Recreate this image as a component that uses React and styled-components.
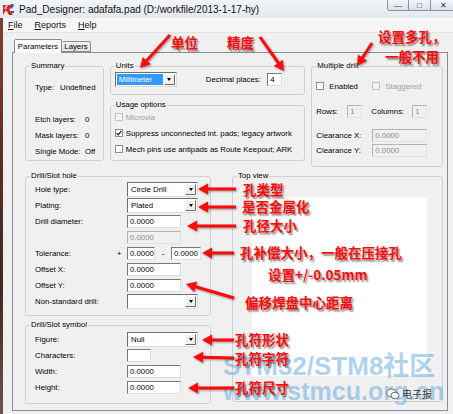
import React from 'react';
import styled, { createGlobalStyle } from 'styled-components';

const UI_FONT = `"Liberation Sans", Arial, sans-serif`;
const CJK_FONT = `"Noto Sans CJK SC", "Noto Sans", sans-serif`;

const GlobalStyle = createGlobalStyle`
  * { box-sizing: border-box; }
  html, body { margin: 0; padding: 0; }
  body {
    width: 453px;
    height: 414px;
    overflow: hidden;
    background: linear-gradient(180deg, #8a3f2e 0%, #5b2f22 40%, #3d2a22 70%, #6e5447 100%);
    font-family: ${UI_FONT};
  }
`;

const Page = styled.div`
  position: relative;
  width: 453px;
  height: 414px;
  overflow: hidden;
  display: flex;
  flex-direction: column;
`;

/* ---------- window chrome ---------- */

const TitleBar = styled.div`
  height: 18px;
  flex: none;
  display: flex;
  align-items: center;
  padding-left: 2px;
  background: linear-gradient(180deg, #f2f4f7 0%, #e4e9ef 100%);
`;

const TitleText = styled.span`
  margin-left: 4px;
  font-size: 10px;
  color: #111;
  white-space: nowrap;
`;

const CaptionGroup = styled.div`
  align-self: flex-start;
  margin-left: auto;
  margin-right: -4px;
  display: flex;
  height: 11px;
  border: 1px solid #8794a6;
  border-top: none;
  border-radius: 0 0 3px 3px;
  overflow: hidden;
`;

const CaptionButton = styled.div`
  width: ${p => p.$w}px;
  height: 100%;
  display: flex;
  align-items: center;
  justify-content: center;
  background: linear-gradient(180deg, #f3f5f8 0%, #dbe1e8 100%);
  border-left: ${p => (p.$first ? 'none' : '1px solid #8794a6')};
  font-size: 8px;
  color: #333;
`;

const Frame = styled.div`
  flex: 1;
  margin-left: 3px;
  display: flex;
  flex-direction: column;
  background: #f0f0f0;
`;

const MenuBar = styled.div`
  height: 15px;
  flex: none;
  display: flex;
  align-items: center;
  gap: 12px;
  padding-left: 5px;
  background: #f6f6f6;
  border-bottom: 1px solid #e4e4e4;
  font-size: 9px;
  color: #111;
`;

const MenuItem = styled.span`
  white-space: nowrap;
  u { text-decoration: underline; }
`;

const Client = styled.div`
  flex: 1;
  display: flex;
  flex-direction: column;
  padding: 6px 5px 3px 9px;
`;

const TabStrip = styled.div`
  height: 13px;
  flex: none;
  display: flex;
  align-items: flex-end;
  padding-left: 2px;
`;

const Tab = styled.div`
  position: relative;
  z-index: ${p => (p.$active ? 1 : 0)};
  width: ${p => p.$w}px;
  height: ${p => (p.$active ? 14 : 11)}px;
  margin-bottom: ${p => (p.$active ? -1 : 0)}px;
  display: flex;
  align-items: center;
  justify-content: center;
  border: 1px solid #898c95;
  border-bottom: ${p => (p.$active ? 'none' : '1px solid #898c95')};
  border-left: ${p => (p.$active ? '1px solid #898c95' : 'none')};
  border-radius: 2px 2px 0 0;
  background: ${p => (p.$active ? '#fcfcfc' : 'linear-gradient(180deg, #f2f2f2, #e3e3e3)')};
  font-size: 7.8px;
  color: #000;
`;

const TabPanel = styled.div`
  flex: 1;
  display: flex;
  flex-direction: column;
  gap: 4px;
  padding: 8px 4px 0 12px;
  border: 1px solid #898c95;
  background: #f0f0f0;
  font-size: 7.8px;
  color: #000;
`;

/* ---------- group boxes ---------- */

const Row = styled.div`
  display: flex;
  align-items: flex-start;
  gap: ${p => p.$gap}px;
`;

const Column = styled.div`
  display: flex;
  flex-direction: column;
  gap: ${p => p.$gap}px;
  width: ${p => p.$w}px;
`;

const Group = styled.fieldset`
  margin: 0;
  min-width: 0;
  width: ${p => (p.$w ? `${p.$w}px` : '100%')};
  height: ${p => p.$h}px;
  padding: 0;
  border: 1px solid #d0d0d0;
  border-radius: 3px;
`;

const Legend = styled.legend`
  margin-left: 4px;
  padding: 0 1px;
  font-size: 7.8px;
  line-height: 10px;
  color: #000;
`;

const GroupBody = styled.div`
  padding-left: ${p => p.$pl ?? 4}px;
`;

/* summary */
const InfoRow = styled.div`
  display: flex;
  align-items: center;
  height: 10px;
  margin-top: ${p => p.$mt}px;
  white-space: nowrap;
`;

const InfoLabel = styled.span`
  width: ${p => p.$w}px;
  flex: none;
`;

/* form rows */
const FormRow = styled.div`
  display: flex;
  align-items: center;
  height: ${p => p.$h ?? 16}px;
  margin-top: ${p => p.$mt ?? 0}px;
  white-space: nowrap;
`;

const FormLabel = styled.span`
  width: ${p => p.$w}px;
  flex: none;
  margin-left: ${p => p.$ml ?? 0}px;
  color: ${p => (p.$disabled ? '#9a9a9a' : '#000')};
`;

const Sign = styled.span`
  width: ${p => p.$w}px;
  flex: none;
  text-align: ${p => p.$align ?? 'left'};
`;

const Field = styled.div`
  width: ${p => p.$w}px;
  height: 13px;
  flex: none;
  margin-left: ${p => p.$ml ?? 0};
  padding-left: 2px;
  background: ${p => (p.$disabled ? '#f0f0f0' : '#fff')};
  color: ${p => (p.$disabled ? '#8a8a8a' : '#000')};
  border: 1px solid;
  border-color: ${p =>
    p.$disabled ? '#b4b4b4 #e2e2e2 #e2e2e2 #b4b4b4' : '#7a7a7a #dedede #dedede #7a7a7a'};
  font-size: 7.8px;
  line-height: 11px;
  overflow: hidden;
`;

const SelectBox = styled.div`
  width: ${p => p.$w}px;
  height: 15px;
  flex: none;
  display: flex;
  padding: 1px;
  background: #fff;
  border: 1px solid;
  border-color: #6f6f6f #dcdcdc #dcdcdc #6f6f6f;
`;

const SelectValue = styled.div`
  flex: 1;
  display: flex;
  align-items: center;
  padding-left: 2px;
  margin-right: 1px;
  background: ${p => (p.$focused ? '#3399ff' : 'transparent')};
  color: ${p => (p.$focused ? '#fff' : '#000')};
  font-size: 7.8px;
`;

const DropButton = styled.div`
  width: 11px;
  flex: none;
  display: flex;
  align-items: center;
  justify-content: center;
  background: #f0f0f0;
  border: 1px solid;
  border-color: #ffffff #6a6a6a #6a6a6a #ffffff;
  &::after {
    content: '';
    border-left: 2.5px solid transparent;
    border-right: 2.5px solid transparent;
    border-top: 3px solid #000;
  }
`;

const CheckRow = styled.div`
  display: flex;
  align-items: center;
  gap: ${p => p.$gap ?? 3}px;
  height: 10px;
  width: ${p => (p.$w ? `${p.$w}px` : 'auto')};
  flex: none;
  margin-top: ${p => p.$mt ?? 0}px;
  white-space: nowrap;
  color: ${p => (p.$disabled ? '#a0a0a0' : '#000')};
`;

const Box = styled.span`
  width: 8px;
  height: 8px;
  flex: none;
  display: flex;
  align-items: center;
  justify-content: center;
  border: 1px solid ${p => (p.$disabled ? '#c2c2c2' : '#8e8f8f')};
  background: ${p => (p.$disabled ? '#f4f4f4' : '#fff')};
`;

const Preview = styled.div`
  width: 175px;
  height: 179px;
  margin-top: 16px;
  background: #fff;
`;

const UnitsRow = styled.div`
  display: flex;
  align-items: center;
  margin-top: 1px;
  padding-right: 22px;
  white-space: nowrap;
`;

/* ---------- annotation layer ---------- */

const Overlay = styled.div`
  position: absolute;
  inset: 0;
  pointer-events: none;
`;

const ArrowLayer = styled.svg`
  position: absolute;
  inset: 0;
  filter: drop-shadow(1.5px 1.5px 1px rgba(0, 0, 0, 0.4));
`;

const Note = styled.span`
  position: absolute;
  left: ${p => p.$x}px;
  top: ${p => p.$y}px;
  font-family: ${CJK_FONT};
  font-weight: 700;
  font-size: ${p => p.$size ?? 13.5}px;
  line-height: 1;
  color: #ff0a0a;
  white-space: nowrap;
  text-shadow: 1.5px 1.5px 1.5px rgba(0, 0, 0, 0.45);
`;

const Watermark = styled.div`
  position: absolute;
  left: 223px;
  top: 353px;
  font-family: "Liberation Sans", "Noto Sans CJK SC", sans-serif;
  font-weight: 700;
  color: rgba(95, 165, 220, 0.5);
  line-height: 1;
  white-space: nowrap;
`;

const WatermarkLine = styled.div`
  font-size: ${p => p.$size}px;
  height: ${p => p.$h}px;
`;

const Badge = styled.div`
  position: absolute;
  left: 386px;
  top: 386px;
  display: flex;
  align-items: center;
  gap: 2px;
  font-family: ${CJK_FONT};
  font-size: 10px;
  color: #3a3a3a;
`;

/* ---------- drawings ---------- */

const AppIcon = () => (
  <svg width="13" height="13" viewBox="0 0 13 13">
    <rect x="0.5" y="0.5" width="12" height="12" fill="#e8eef5" />
    <path d="M1 2h7l3 3-4 1 4 6H7L4 7 1 12z" fill="#d8211c" />
    <path d="M3 3h3M2 5h3" stroke="#fff" strokeWidth="1" />
    <rect x="8.5" y="1" width="3" height="3" fill="#2b55c8" />
    <rect x="9" y="8" width="3" height="2" fill="#2b55c8" />
  </svg>
);

const CheckMark = () => (
  <svg width="6" height="6" viewBox="0 0 6 6">
    <path d="M0.6 3.1 L2.3 4.8 L5.4 0.9" fill="none" stroke="#1b1b1b" strokeWidth="1.3" />
  </svg>
);

const ChatIcon = () => (
  <svg width="14" height="12" viewBox="0 0 14 12">
    <ellipse cx="5.5" cy="5" rx="4.8" ry="4" fill="#fff" stroke="#555" strokeWidth="0.9" />
    <ellipse cx="9" cy="7.5" rx="4" ry="3.3" fill="#fff" stroke="#555" strokeWidth="0.9" />
  </svg>
);

const arrows = [
  [170, 35, 140, 68],
  [260, 37, 284, 71],
  [372, 43, 357, 66],
  [236, 189, 198, 189],
  [236, 207, 198, 207],
  [236, 226, 187, 226],
  [234, 253, 202, 253],
  [234, 298, 186, 284],
  [234, 340, 202, 340],
  [234, 358, 193, 357],
  [234, 388, 188, 388],
];

const Arrow = ({ x1, y1, x2, y2 }) => {
  const dx = x2 - x1;
  const dy = y2 - y1;
  const len = Math.hypot(dx, dy);
  const ux = dx / len;
  const uy = dy / len;
  const L = 10;
  const W = 5.5;
  const bx = x2 - ux * L;
  const by = y2 - uy * L;
  const px = -uy;
  const py = ux;
  const pts = `${x2},${y2} ${bx + px * W},${by + py * W} ${bx - px * W},${by - py * W}`;
  return (
    <g>
      <line x1={x1} y1={y1} x2={bx + ux} y2={by + uy} stroke="#ff0a0a" strokeWidth="3" />
      <polygon points={pts} fill="#ff0a0a" />
    </g>
  );
};

const notes = [
  { x: 171, y: 36, t: '单位' },
  { x: 227, y: 36, t: '精度' },
  { x: 378, y: 30, t: '设置多孔，' },
  { x: 385, y: 50, t: '一般不用' },
  { x: 243, y: 183, t: '孔类型' },
  { x: 242, y: 200, t: '是否金属化' },
  { x: 243, y: 219, t: '孔径大小' },
  { x: 240, y: 246, t: '孔补偿大小，一般在压接孔' },
  { x: 268, y: 268, t: '设置+/-0.05mm' },
  { x: 245, y: 296, t: '偏移焊盘中心距离' },
  { x: 235, y: 333, t: '孔符形状' },
  { x: 235, y: 352, t: '孔符字符' },
  { x: 235, y: 381, t: '孔符尺寸' },
];

/* ---------- small controls ---------- */

const Select = ({ w, value, focused }) => (
  <SelectBox $w={w}>
    <SelectValue $focused={focused}>{value}</SelectValue>
    <DropButton />
  </SelectBox>
);

const CheckBox = ({ checked, disabled, label, gap, w, mt }) => (
  <CheckRow $disabled={disabled} $gap={gap} $w={w} $mt={mt}>
    <Box $disabled={disabled}>{checked && <CheckMark />}</Box>
    {label}
  </CheckRow>
);

export default function App() {
  return (
    <>
      <GlobalStyle />
      <Page>
        <TitleBar>
          <AppIcon />
          <TitleText>Pad_Designer: adafafa.pad (D:/workfile/2013-1-17-hy)</TitleText>
          <CaptionGroup>
            <CaptionButton $w={20} $first>—</CaptionButton>
            <CaptionButton $w={22}>□</CaptionButton>
            <CaptionButton $w={26}>✕</CaptionButton>
          </CaptionGroup>
        </TitleBar>

        <Frame>
          <MenuBar>
            <MenuItem><u>F</u>ile</MenuItem>
            <MenuItem><u>R</u>eports</MenuItem>
            <MenuItem><u>H</u>elp</MenuItem>
          </MenuBar>

          <Client>
            <TabStrip>
              <Tab $active $w={48}>Parameters</Tab>
              <Tab $w={29}>Layers</Tab>
            </TabStrip>

            <TabPanel>
              <Row $gap={6}>
                <Group $w={79} $h={100}>
                  <Legend>Summary</Legend>
                  <GroupBody $pl={9}>
                    <InfoRow $mt={11}>
                      <InfoLabel $w={25}>Type:</InfoLabel>Undefined
                    </InfoRow>
                    <InfoRow $mt={22}>
                      <InfoLabel $w={50}>Etch layers:</InfoLabel>0
                    </InfoRow>
                    <InfoRow $mt={6}>
                      <InfoLabel $w={50}>Mask layers:</InfoLabel>0
                    </InfoRow>
                    <InfoRow $mt={6}>
                      <InfoLabel $w={50}>Single Mode:</InfoLabel>Off
                    </InfoRow>
                  </GroupBody>
                </Group>

                <Column $w={196} $gap={5}>
                  <Group $h={34}>
                    <Legend>Units</Legend>
                    <GroupBody>
                      <UnitsRow>
                        <Select w={62} value="Millimeter" focused />
                        <FormLabel $ml={29}>Decimal places:</FormLabel>
                        <Field $w={15} $ml="auto">4</Field>
                      </UnitsRow>
                    </GroupBody>
                  </Group>
                  <Group $h={61}>
                    <Legend>Usage options</Legend>
                    <GroupBody>
                      <CheckBox disabled label="Microvia" mt={2} />
                      <CheckBox checked label="Suppress unconnected int. pads; legacy artwork" mt={6} />
                      <CheckBox label="Mech pins use antipads as Route Keepout; ARK" mt={6} />
                    </GroupBody>
                  </Group>
                </Column>

                <Group $w={132} $h={106}>
                  <Legend>Multiple drill</Legend>
                  <GroupBody>
                    <FormRow $h={10} $mt={10}>
                      <CheckBox label="Enabled" gap={5} w={56} />
                      <CheckBox label="Staggered" gap={5} disabled />
                    </FormRow>
                    <FormRow $h={13} $mt={14}>
                      <FormLabel $w={31}>Rows:</FormLabel>
                      <Field $w={15} $disabled>1</Field>
                      <FormLabel $w={41} $ml={9}>Columns:</FormLabel>
                      <Field $w={15} $disabled>1</Field>
                    </FormRow>
                    <FormRow $h={13} $mt={11}>
                      <FormLabel $w={56}>Clearance X:</FormLabel>
                      <Field $w={55} $disabled>0.0000</Field>
                    </FormRow>
                    <FormRow $h={13} $mt={2}>
                      <FormLabel $w={56}>Clearance Y:</FormLabel>
                      <Field $w={55} $disabled>0.0000</Field>
                    </FormRow>
                  </GroupBody>
                </Group>
              </Row>

              <Row $gap={21}>
                <Column $w={186} $gap={4}>
                  <Group $h={145}>
                    <Legend>Drill/Slot hole</Legend>
                    <GroupBody $pl={9}>
                      <FormRow>
                        <FormLabel $w={92}>Hole type:</FormLabel>
                        <Select w={71} value="Circle Drill" />
                      </FormRow>
                      <FormRow>
                        <FormLabel $w={92}>Plating:</FormLabel>
                        <Select w={71} value="Plated" />
                      </FormRow>
                      <FormRow>
                        <FormLabel $w={92}>Drill diameter:</FormLabel>
                        <Field $w={54}>0.0000</Field>
                      </FormRow>
                      <FormRow>
                        <FormLabel $w={92} />
                        <Field $w={54} $disabled>0.0000</Field>
                      </FormRow>
                      <FormRow>
                        <FormLabel $w={82}>Tolerance:</FormLabel>
                        <Sign $w={10}>+</Sign>
                        <Field $w={28}>0.0000</Field>
                        <Sign $w={16} $align="center">-</Sign>
                        <Field $w={30}>0.0000</Field>
                      </FormRow>
                      <FormRow>
                        <FormLabel $w={92}>Offset X:</FormLabel>
                        <Field $w={54}>0.0000</Field>
                      </FormRow>
                      <FormRow>
                        <FormLabel $w={92}>Offset Y:</FormLabel>
                        <Field $w={54}>0.0000</Field>
                      </FormRow>
                      <FormRow>
                        <FormLabel $w={92}>Non-standard drill:</FormLabel>
                        <Select w={71} value="" />
                      </FormRow>
                    </GroupBody>
                  </Group>

                  <Group $h={84}>
                    <Legend>Drill/Slot symbol</Legend>
                    <GroupBody $pl={9}>
                      <FormRow $mt={1}>
                        <FormLabel $w={92}>Figure:</FormLabel>
                        <Select w={71} value="Null" />
                      </FormRow>
                      <FormRow>
                        <FormLabel $w={92}>Characters:</FormLabel>
                        <Field $w={24} />
                      </FormRow>
                      <FormRow>
                        <FormLabel $w={92}>Width:</FormLabel>
                        <Field $w={54}>0.0000</Field>
                      </FormRow>
                      <FormRow>
                        <FormLabel $w={92}>Height:</FormLabel>
                        <Field $w={54}>0.0000</Field>
                      </FormRow>
                    </GroupBody>
                  </Group>
                </Column>

                <Group $w={211} $h={231}>
                  <Legend>Top view</Legend>
                  <GroupBody $pl={19}>
                    <Preview />
                  </GroupBody>
                </Group>
              </Row>
            </TabPanel>
          </Client>
        </Frame>

        <Overlay>
          <Watermark>
            <WatermarkLine $size={26} $h={26}>STM32/STM8社区</WatermarkLine>
            <WatermarkLine $size={25} $h={25}>www.stmcu.org.cn</WatermarkLine>
          </Watermark>
          <Badge>
            <ChatIcon />
            电子报
          </Badge>
          <ArrowLayer width="453" height="414" viewBox="0 0 453 414">
            {arrows.map(([x1, y1, x2, y2], i) => (
              <Arrow key={i} x1={x1} y1={y1} x2={x2} y2={y2} />
            ))}
          </ArrowLayer>
          {notes.map(n => (
            <Note key={n.t} $x={n.x} $y={n.y}>{n.t}</Note>
          ))}
        </Overlay>
      </Page>
    </>
  );
}
